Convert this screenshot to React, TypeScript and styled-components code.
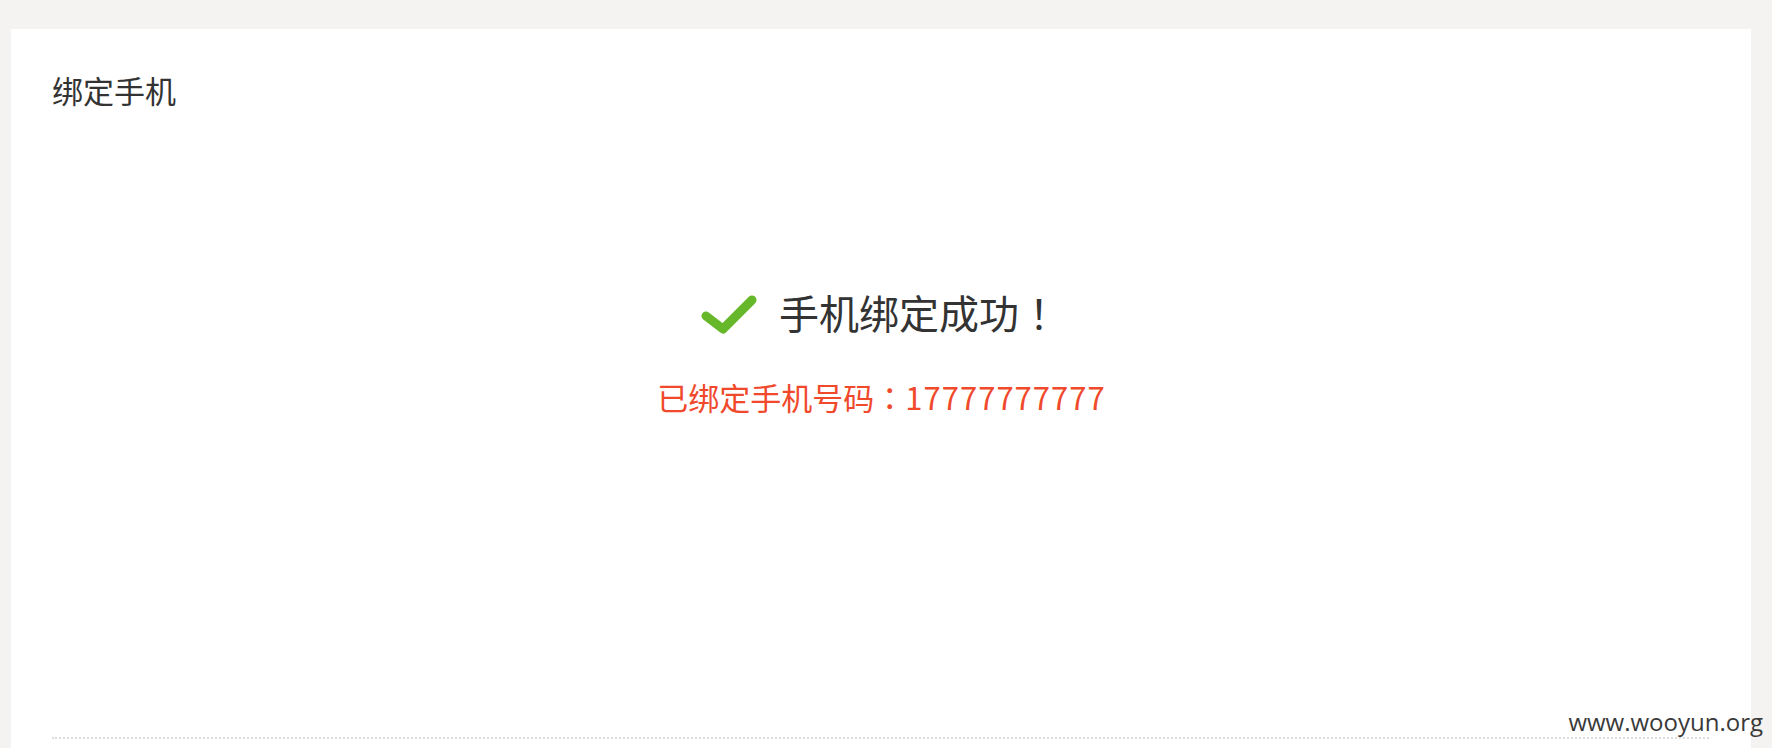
import React from "react";
import styled, { createGlobalStyle } from "styled-components";

const GlobalStyle = createGlobalStyle`
  html, body {
    margin: 0;
    padding: 0;
    background: #f4f3f1;
  }
  body {
    font-family: "Noto Sans CJK SC", "Noto Sans", sans-serif;
  }
`;

const Page = styled.div`
  position: relative;
  height: 748px;
  box-sizing: border-box;
  padding: 29px 21px 0 11px;
  overflow: hidden;
`;

const Card = styled.section`
  background: #ffffff;
  height: 100%;
  box-sizing: border-box;
  padding: 36px 40px 0 41px;
  display: flex;
  flex-direction: column;
`;

const Title = styled.h2`
  margin: 0;
  font-size: 31px;
  font-weight: 400;
  line-height: 50px;
  color: #333333;
`;

const Result = styled.div`
  display: flex;
  flex-direction: column;
  align-items: center;
  padding-top: 172px;
  flex: 1;
`;

const Heading = styled.div`
  display: flex;
  align-items: center;
  gap: 21px;
  margin-left: 4px;
  margin-right: 10px;
`;

const CheckIcon = styled.svg`
  display: block;
  margin-top: 6px;
  flex: none;
`;

const HeadingText = styled.span`
  font-size: 40px;
  line-height: 50px;
  color: #333333;
`;

const Punct = styled.span`
  font-family: "Noto Sans CJK TC", "Noto Sans CJK SC", sans-serif;
`;

const Digits = styled.span`
  letter-spacing: 1px;
`;

const Phone = styled.div`
  margin-top: 40px;
  font-size: 31px;
  line-height: 40px;
  color: #f0492b;
`;

const Divider = styled.div`
  border-top: 2px dotted #dcdcdc;
  margin-bottom: 9px;
  margin-right: 2px;
`;

const Watermark = styled.div`
  position: absolute;
  right: 9px;
  bottom: 11px;
  font-family: "Open Sans", "DejaVu Sans", sans-serif;
  font-size: 24px;
  line-height: 30px;
  color: #3a3a3a;
`;

const Check = () => (
  <CheckIcon width="60" height="44" viewBox="0 0 60 44">
    <defs>
      <filter
        id="soft"
        filterUnits="userSpaceOnUse"
        x="0"
        y="0"
        width="60"
        height="44"
      >
        <feGaussianBlur stdDeviation="0.7" />
      </filter>
    </defs>
    <polyline
      points="8,23 25,36 54,7"
      fill="none"
      stroke="#66b82a"
      strokeWidth="9"
      strokeLinecap="round"
      strokeLinejoin="round"
      filter="url(#soft)"
    />
  </CheckIcon>
);

export default function App() {
  return (
    <>
      <GlobalStyle />
      <Page>
        <Card>
          <Title>绑定手机</Title>
          <Result>
            <Heading>
              <Check />
              <HeadingText>
                手机绑定成功<Punct>！</Punct>
              </HeadingText>
            </Heading>
            <Phone>
              已绑定手机号码<Punct>：</Punct>
              <Digits>17777777777</Digits>
            </Phone>
          </Result>
          <Divider />
        </Card>
        <Watermark>www.wooyun.org</Watermark>
      </Page>
    </>
  );
}
